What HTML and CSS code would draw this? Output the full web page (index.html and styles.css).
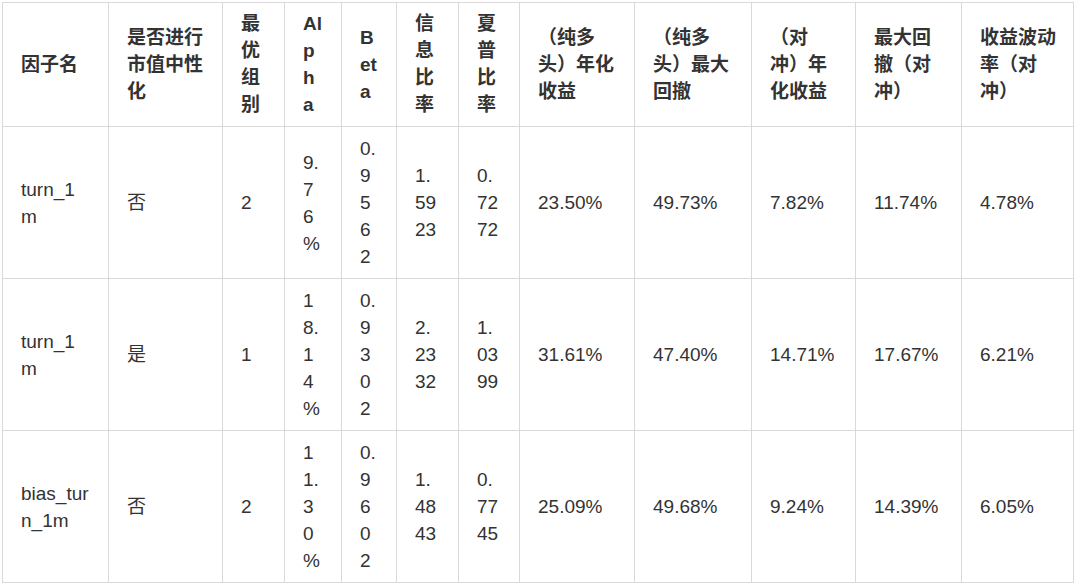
FILE: index.html
```html
<!DOCTYPE html>
<html lang="zh-CN">
<head>
<meta charset="utf-8">
<title>因子表现</title>
<link rel="stylesheet" href="styles.css">
</head>
<body>
<div class="wrap">
<table class="factor-table">
  <colgroup>
    <col class="w106"><col class="w114"><col class="w62"><col class="w57"><col class="w55"><col class="w62"><col class="w61"><col class="w115"><col class="w117"><col class="w104"><col class="w106"><col class="w112">
  </colgroup>
  <thead>
    <tr>
      <th>因子名</th>
      <th>是否进行市值中性化</th>
      <th>最优组别</th>
      <th>Alpha</th>
      <th>Beta</th>
      <th>信息比率</th>
      <th>夏普比率</th>
      <th>（纯多头）年化收益</th>
      <th>（纯多头）最大回撤</th>
      <th>（对冲）年化收益</th>
      <th>最大回撤（对冲）</th>
      <th>收益波动率（对冲）</th>
    </tr>
  </thead>
  <tbody>
    <tr>
      <td>turn_1m</td><td>否</td><td>2</td><td>9.76%</td><td>0.9562</td><td>1.5923</td><td>0.7272</td><td>23.50%</td><td>49.73%</td><td>7.82%</td><td>11.74%</td><td>4.78%</td>
    </tr>
    <tr>
      <td>turn_1m</td><td>是</td><td>1</td><td>18.14%</td><td>0.9302</td><td>2.2332</td><td>1.0399</td><td>31.61%</td><td>47.40%</td><td>14.71%</td><td>17.67%</td><td>6.21%</td>
    </tr>
    <tr>
      <td>bias_turn_1m</td><td>否</td><td>2</td><td>11.30%</td><td>0.9602</td><td>1.4843</td><td>0.7745</td><td>25.09%</td><td>49.68%</td><td>9.24%</td><td>14.39%</td><td>6.05%</td>
    </tr>
  </tbody>
</table>
</div>
</body>
</html>
```

FILE: styles.css
```css
html, body {
  margin: 0;
  padding: 0;
  background: #ffffff;
}

.wrap {
  padding: 2px 0 0 2px;
}

.factor-table {
  table-layout: fixed;
  border-collapse: collapse;
  width: 1071px;
  font-family: "Liberation Sans", "Noto Sans CJK SC", sans-serif;
  font-size: 19px;
  line-height: 27px;
  color: #333333;
  text-spacing-trim: space-all;
}

.factor-table th,
.factor-table td {
  border: 1px solid #d9d9d9;
  padding: 8px 18px;
  text-align: left;
  vertical-align: middle;
  word-break: break-all;
  overflow-wrap: anywhere;
}

.factor-table th {
  font-weight: bold;
  padding-top: 7px;
  padding-bottom: 8px;
}

.factor-table th:last-child,
.factor-table td:last-child {
  padding-right: 14px;
}

.w106 { width: 106px; }
.w114 { width: 114px; }
.w62 { width: 62px; }
.w57 { width: 57px; }
.w55 { width: 55px; }
.w61 { width: 61px; }
.w115 { width: 115px; }
.w117 { width: 117px; }
.w104 { width: 104px; }
.w112 { width: 112px; }
```
